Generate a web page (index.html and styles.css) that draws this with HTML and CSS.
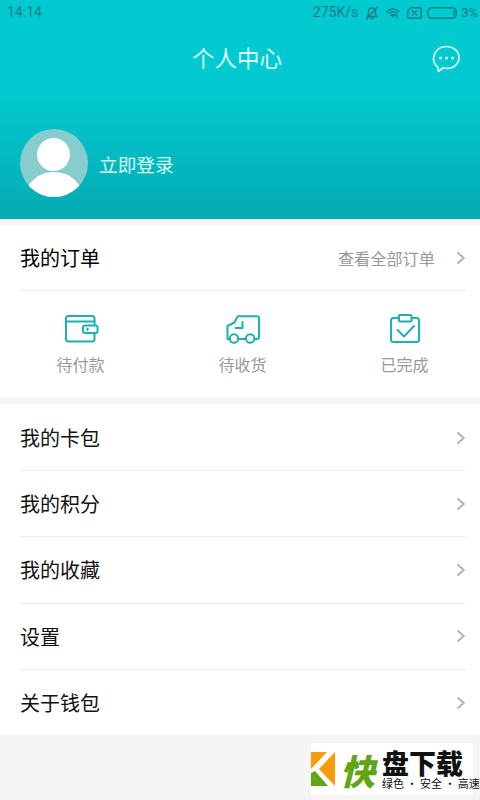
FILE: index.html
```
<!DOCTYPE html>
<html lang="zh-CN">
<head>
<meta charset="utf-8">
<title>个人中心</title>
<link rel="stylesheet" href="styles.css">
</head>
<body>
<header class="hero">
  <div class="status">
    <span class="time">14:14</span>
    <span class="speed">275K/s</span>
    <svg class="bell" width="14" height="14" viewBox="0 0 14 14"><path d="M2 10.5h10l-1.500-2V5.500a3.500 3.500 0 0 0-7 0v3zM6 12.500h2M12.500 1L1.500 13"/></svg>
    <svg class="wifi" width="14" height="12" viewBox="0 0 14 12"><path d="M1 4.500q6-5 12 0M3 6.500q4-3.500 8 0M5 8.500q2-2 4 0M7 9v1M11 8v3"/></svg>
    <svg class="sim" width="15" height="12" viewBox="0 0 15 12"><path d="M4 .8h9q1.200 0 1.200 1.200v8q0 1.200-1.200 1.200H2Q.8 11.200.8 10V4zM5.500 4l4 4M9.500 4l-4 4"/></svg>
    <svg class="battery" width="31" height="12" viewBox="0 0 31 12"><rect x=".8" y=".8" width="28.500" height="10.400" rx="4.500"/><path d="M27 4v4"/></svg>
    <span class="percent">3%</span>
  </div>
  <div class="titlebar">
    <h1>个人中心</h1>
    <svg class="chat" width="30" height="30" viewBox="0 0 30 30"><path d="M7 23.500C-2 16 4 2.500 15.500 2.500c7 0 12.500 4.700 12.500 11 0 8.500-9 12.500-16 10.300L7.300 27.500z"/><g><circle cx="9.500" cy="14" r="1.500"/><circle cx="15.500" cy="14" r="1.500"/><circle cx="21.500" cy="14" r="1.500"/></g></svg>
  </div>
  <div class="profile">
    <svg width="68" height="68" viewBox="0 0 68 68"><defs><clipPath id="face"><circle cx="34" cy="34" r="34"/></clipPath></defs><g clip-path="url(#face)"><path fill="#87cdce" d="M0 0h68v68H0z"/><circle cx="33.500" cy="25.500" r="16.500" fill="#fff"/><ellipse cx="34" cy="67" rx="28" ry="24" fill="#fff"/></g></svg>
    <span>立即登录</span>
  </div>
</header>
<section class="orders">
  <div class="orders-head">
    <h2>我的订单</h2>
    <span class="all">查看全部订单</span>
    <svg class="arrow" width="10" height="14" viewBox="0 0 10 14"><path d="M1.500 1.500L7.700 7l-6.200 5.500"/></svg>
  </div>
  <div class="states">
    <div class="state">
      <svg width="36" height="32" viewBox="0 0 36 32"><rect x="3" y="3" width="28.500" height="25.500" rx="2.500"/><path d="M3 8.500h28.500"/><rect class="fill" x="20" y="12.500" width="14.500" height="7.500" rx="2"/><path d="M24.500 15.500v1.500"/></svg>
      <span>待付款</span>
    </div>
    <div class="state">
      <svg width="36" height="32" viewBox="0 0 36 32"><path d="M5 26H2.500V13L9.500 9.500 12 4.500Q12.500 3.200 14 3.200h18.500Q34 3.200 34 5v19q0 2-2 2h-2M13 26h7M10.500 15h7V9"/><circle cx="9" cy="25.500" r="4.200"/><circle cx="25.200" cy="25.500" r="4.200"/></svg>
      <span>待收货</span>
    </div>
    <div class="state">
      <svg width="36" height="32" viewBox="0 0 36 32"><path d="M10.500 5H6.500Q4 5 4 7.500v19Q4 29 6.500 29h23q2.500 0 2.500-2.500v-19Q32 5 29.500 5h-4M10.500 17l6.500 6.500L27 13"/><rect x="12" y="2" width="12.500" height="6.500" rx="1"/></svg>
      <span>已完成</span>
    </div>
  </div>
</section>
<nav class="menu">
  <div class="item"><span>我的卡包</span><svg class="arrow" width="10" height="14" viewBox="0 0 10 14"><path d="M1.500 1.500L7.700 7l-6.200 5.500"/></svg></div>
  <div class="item"><span>我的积分</span><svg class="arrow" width="10" height="14" viewBox="0 0 10 14"><path d="M1.500 1.500L7.700 7l-6.200 5.500"/></svg></div>
  <div class="item"><span>我的收藏</span><svg class="arrow" width="10" height="14" viewBox="0 0 10 14"><path d="M1.500 1.500L7.700 7l-6.200 5.500"/></svg></div>
  <div class="item"><span>设置</span><svg class="arrow" width="10" height="14" viewBox="0 0 10 14"><path d="M1.500 1.500L7.700 7l-6.200 5.500"/></svg></div>
  <div class="item"><span>关于钱包</span><svg class="arrow" width="10" height="14" viewBox="0 0 10 14"><path d="M1.500 1.500L7.700 7l-6.200 5.500"/></svg></div>
</nav>
<footer>
  <div class="brand">
    <svg width="24" height="34" viewBox="0 0 24 34"><path fill="#fb9b0b" d="M0 0h16L0 17zM24 0v34L8 17z"/><path fill="#62a514" d="M0 21l4-2 13 15H0z"/></svg>
    <span class="quick">快</span>
    <div class="brand-text"><strong>盘下载</strong><small>绿色 · 安全 · 高速</small></div>
  </div>
</footer>
</body>
</html>
```
FILE: styles.css
```
* { box-sizing: border-box; }
body { margin: 0; width: 480px; height: 800px; overflow: hidden; background: #f5f5f5; font-family: "Noto Sans", "Noto Sans CJK SC", sans-serif; }
svg { display: block; flex: none; fill: none; stroke-linecap: round; stroke-linejoin: round; }
h1, h2 { margin: 0; font-weight: 400; }
.hero { height: 219px; background: linear-gradient(#02cad1 0, #02c9d0 90px, #04abb3 100%); color: #d9ffff; }
.status { height: 25px; display: flex; align-items: center; padding: 0 2px 0 7px; color: #087e87; font: 14px/25px Roboto, sans-serif; }
.status svg { stroke: #087e87; stroke-width: 1.4; }
.speed { margin-left: auto; }
.bell { margin-left: 7px; }
.wifi { margin-left: 7px; }
.sim { margin-left: 7px; }
.battery { margin-left: 5px; }
.percent { margin-left: 3px; font-size: 13px; }
.titlebar { height: 67px; display: grid; grid-template-columns: 1fr auto 1fr; align-items: center; padding: 0 19px 0 13px; }
.titlebar h1 { grid-column: 2; font-size: 22.5px; line-height: 30px; }
.chat { justify-self: end; stroke: #d9ffff; stroke-width: 1.7; }
.chat g { fill: #d9ffff; stroke: none; }
.profile { display: flex; align-items: center; gap: 11px; padding: 37px 20px 0; font-size: 18.700px; }
.orders { height: 180px; margin-top: 6px; background: #fff; }
.orders-head { height: 66px; margin: 0 14px 0 20px; display: flex; align-items: center; border-bottom: 1px solid #eee; }
.orders-head h2 { font-size: 20px; }
.all { margin-left: auto; margin-right: 21px; color: #999; font-size: 16.200px; }
.arrow { stroke: #b3b3b3; stroke-width: 2; stroke-linecap: butt; stroke-linejoin: miter; }
.states { display: grid; grid-template-columns: repeat(3, 162px); margin-left: -0.500px; padding-top: 22px; }
.state { display: flex; flex-direction: column; align-items: center; gap: 8px; color: #999; font-size: 16px; line-height: 24px; }
.state svg { stroke: #1eb0b2; stroke-width: 2; }
.state .fill { fill: #fff; }
.menu { margin-top: 1px; padding-top: 1px; background: #fff; height: 331px; margin-top: 0; }
.orders { margin-bottom: 6px; height: 173px; }
.item { height: 66.200px; margin: 0 14px 0 20px; display: flex; align-items: center; justify-content: space-between; border-bottom: 1px solid #eee; font-size: 20px; color: #111; }
.item:last-child { border-bottom: 0; }
footer { height: 65px; display: flex; justify-content: flex-end; padding: 8px 7px 0 0; }
.brand { width: 162px; height: 52px; display: flex; align-items: center; background: #fff; }
.quick { margin-left: 5px; color: #62a514; font: italic 900 35px/45px "Noto Sans CJK SC", sans-serif; }
.brand-text { display: flex; flex-direction: column; margin-left: 7px; color: #111; white-space: nowrap; }
.brand-text strong { font: 900 27px/27px "Noto Sans CJK SC", sans-serif; }
.brand-text small { font: 11px/14px "Noto Sans CJK SC", sans-serif; }
```
